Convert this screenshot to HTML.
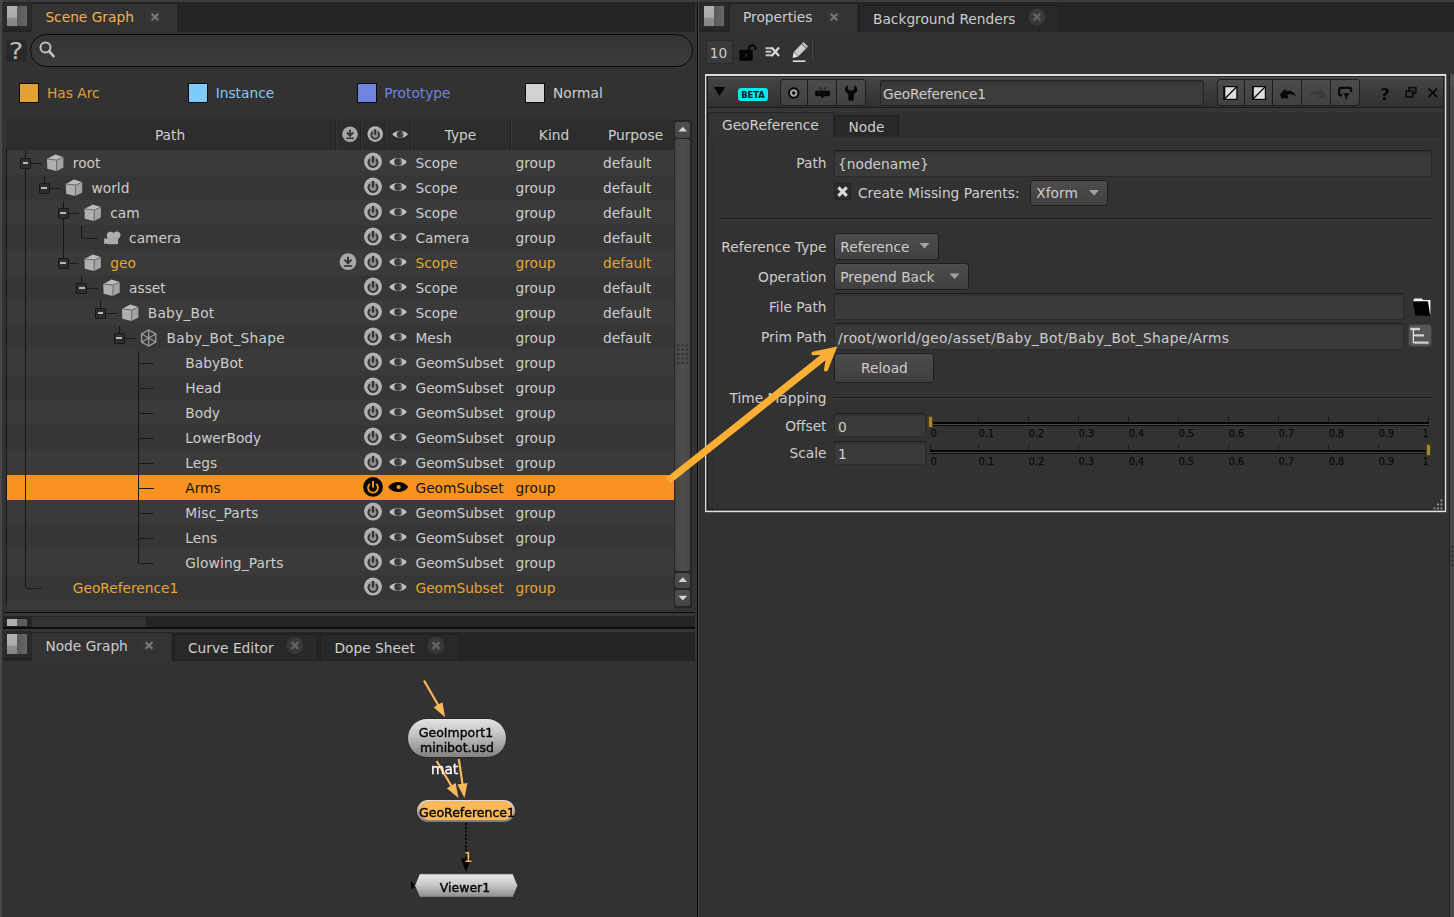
<!DOCTYPE html>
<html lang="en"><head><meta charset="utf-8"><title>Scene Graph - GeoReference</title>
<style>
html,body{margin:0;padding:0;background:#323232;}
body{width:1454px;height:917px;overflow:hidden;font-family:"DejaVu Sans","Liberation Sans",sans-serif;}
#app{position:relative;width:1454px;height:917px;overflow:hidden;background:#323232;}
#app div,#app span.t,#app svg{position:absolute;box-sizing:border-box;}
span.t{white-space:nowrap;line-height:1;font-family:"DejaVu Sans","Liberation Sans",sans-serif;}
svg{overflow:visible;}

</style></head>
<body>
<div id="app">
<div style="left:0px;top:0px;width:1454px;height:2px;background:#3c3c3c;"></div>
<div style="left:0px;top:0px;width:2.2px;height:917px;background:#484848;"></div>
<div style="left:697px;top:2px;width:1px;height:915px;background:#080808;"></div>
<div style="left:3px;top:2px;width:692px;height:30px;background:#242424;"></div>
<div style="left:3px;top:3px;width:28px;height:26px;background:#2a2a2a;"></div>
<div style="left:7px;top:6px;width:10px;height:20px;background:linear-gradient(#b4b4b4 0,#ababab 55%,#8e8e8e 62%,#868686 100%);"></div>
<div style="left:17px;top:6px;width:10px;height:20px;background:linear-gradient(90deg,#5a5a5a,#666);"></div>
<div style="left:31px;top:3px;width:147px;height:29px;background:#333;border:1px solid #262626;border-bottom:none;"></div>
<span class="t " style="left:45.4px;top:9px;font-size:13.75px;line-height:16px;height:16px;color:#f0b056;">Scene Graph</span>
<svg style="left:147px;top:9px;" width="16" height="16" viewBox="0 0 16 16"><circle cx="8" cy="8" r="7.5" fill="#363636"/><path d="M4.7 4.7 L11.3 11.3 M11.3 4.7 L4.7 11.3" stroke="#767676" stroke-width="2.2"/></svg>
<div style="left:5.5px;top:39.5px;width:21px;height:22px;background:#292929;border-radius:2px;"></div>
<span class="t " style="left:-184px;width:400px;text-align:center;top:38px;font-size:22.5px;line-height:26px;height:26px;color:#b9b9b9;transform:scaleX(1.22);">?</span>
<div style="left:30px;top:34px;width:663px;height:32.5px;border:1.5px solid #0a0a0a;border-radius:17px;background:linear-gradient(#333,#3c3c3c);"></div>
<svg style="left:38px;top:40px;" width="20" height="20" viewBox="0 0 20 20"><circle cx="7.5" cy="7.5" r="5" fill="none" stroke="#c0c0c0" stroke-width="2"/><path d="M11 11.2 L15.5 16.2" stroke="#c0c0c0" stroke-width="2.6" stroke-linecap="round"/></svg>
<div style="left:19px;top:83px;width:20px;height:20px;background:#e2a133;border:1px solid #0a0a0a;"></div>
<span class="t " style="left:47px;top:85px;font-size:13.75px;line-height:16px;height:16px;color:#e2a133;">Has Arc</span>
<div style="left:187.5px;top:83px;width:20px;height:20px;background:#7fcbfb;border:1px solid #0a0a0a;"></div>
<span class="t " style="left:215.7px;top:85px;font-size:13.75px;line-height:16px;height:16px;color:#7fcbfb;">Instance</span>
<div style="left:357px;top:83px;width:20px;height:20px;background:#6f83e0;border:1px solid #0a0a0a;"></div>
<span class="t " style="left:384.2px;top:85px;font-size:13.75px;line-height:16px;height:16px;color:#6f83e0;">Prototype</span>
<div style="left:525px;top:83px;width:20px;height:20px;background:#d2d2d2;border:1px solid #0a0a0a;"></div>
<span class="t " style="left:553px;top:85px;font-size:13.75px;line-height:16px;height:16px;color:#cdcdcd;">Normal</span>
<div style="left:6px;top:148px;width:1px;height:457px;background:#161616;"></div>
<div style="left:7px;top:117px;width:667px;height:33px;background:linear-gradient(#323232 0,#2c2c2c 5px,#2d2d2d 100%);"></div>
<div style="left:335px;top:119px;width:1px;height:31px;background:#222;"></div>
<div style="left:336px;top:119px;width:1px;height:31px;background:#353535;"></div>
<div style="left:360px;top:119px;width:1px;height:31px;background:#222;"></div>
<div style="left:361px;top:119px;width:1px;height:31px;background:#353535;"></div>
<div style="left:385px;top:119px;width:1px;height:31px;background:#222;"></div>
<div style="left:386px;top:119px;width:1px;height:31px;background:#353535;"></div>
<div style="left:410px;top:119px;width:1px;height:31px;background:#222;"></div>
<div style="left:411px;top:119px;width:1px;height:31px;background:#353535;"></div>
<div style="left:510px;top:119px;width:1px;height:31px;background:#222;"></div>
<div style="left:511px;top:119px;width:1px;height:31px;background:#353535;"></div>
<span class="t " style="left:-30px;width:400px;text-align:center;top:127px;font-size:13.75px;line-height:16px;height:16px;color:#cdcdcd;">Path</span>
<span class="t " style="left:260.5px;width:400px;text-align:center;top:127px;font-size:13.75px;line-height:16px;height:16px;color:#cdcdcd;">Type</span>
<span class="t " style="left:354px;width:400px;text-align:center;top:127px;font-size:13.75px;line-height:16px;height:16px;color:#cdcdcd;">Kind</span>
<span class="t " style="left:435.5px;width:400px;text-align:center;top:127px;font-size:13.75px;line-height:16px;height:16px;color:#cdcdcd;">Purpose</span>
<div style="left:7px;top:150px;width:667px;height:25px;background:#3a3a3a;"></div>
<div style="left:7px;top:175px;width:667px;height:25px;background:#363636;"></div>
<div style="left:7px;top:200px;width:667px;height:25px;background:#3a3a3a;"></div>
<div style="left:7px;top:225px;width:667px;height:25px;background:#363636;"></div>
<div style="left:7px;top:250px;width:667px;height:25px;background:#3a3a3a;"></div>
<div style="left:7px;top:275px;width:667px;height:25px;background:#363636;"></div>
<div style="left:7px;top:300px;width:667px;height:25px;background:#3a3a3a;"></div>
<div style="left:7px;top:325px;width:667px;height:25px;background:#363636;"></div>
<div style="left:7px;top:350px;width:667px;height:25px;background:#3a3a3a;"></div>
<div style="left:7px;top:375px;width:667px;height:25px;background:#363636;"></div>
<div style="left:7px;top:400px;width:667px;height:25px;background:#3a3a3a;"></div>
<div style="left:7px;top:425px;width:667px;height:25px;background:#363636;"></div>
<div style="left:7px;top:450px;width:667px;height:25px;background:#3a3a3a;"></div>
<div style="left:7px;top:475px;width:667px;height:25px;background:#f7931e;"></div>
<div style="left:7px;top:500px;width:667px;height:25px;background:#3a3a3a;"></div>
<div style="left:7px;top:525px;width:667px;height:25px;background:#363636;"></div>
<div style="left:7px;top:550px;width:667px;height:25px;background:#3a3a3a;"></div>
<div style="left:7px;top:575px;width:667px;height:25px;background:#363636;"></div>
<div style="left:7px;top:600px;width:667px;height:9.6px;background:#3a3a3a;"></div>
<div style="left:25.0px;top:151px;width:1.1px;height:437px;background:#161616;"></div>
<div style="left:25.5px;top:587.5px;width:16.0px;height:1px;background:#1a1a1a;"></div>
<div style="left:43.8px;top:176px;width:1.1px;height:7px;background:#161616;"></div>
<div style="left:62.5px;top:201px;width:1.1px;height:62px;background:#161616;"></div>
<div style="left:81.2px;top:226px;width:1.1px;height:12px;background:#161616;"></div>
<div style="left:81.75px;top:237.5px;width:16.0px;height:1px;background:#1a1a1a;"></div>
<div style="left:81.2px;top:276px;width:1.1px;height:7px;background:#161616;"></div>
<div style="left:100.0px;top:301px;width:1.1px;height:7px;background:#161616;"></div>
<div style="left:118.8px;top:326px;width:1.1px;height:7px;background:#161616;"></div>
<div style="left:137.5px;top:351px;width:1.1px;height:212px;background:#161616;"></div>
<div style="left:138.0px;top:362.5px;width:16.0px;height:1px;background:#1a1a1a;"></div>
<div style="left:138.0px;top:387.5px;width:16.0px;height:1px;background:#1a1a1a;"></div>
<div style="left:138.0px;top:412.5px;width:16.0px;height:1px;background:#1a1a1a;"></div>
<div style="left:138.0px;top:437.5px;width:16.0px;height:1px;background:#1a1a1a;"></div>
<div style="left:138.0px;top:462.5px;width:16.0px;height:1px;background:#1a1a1a;"></div>
<div style="left:138.0px;top:487.5px;width:16.0px;height:1px;background:#1a1a1a;"></div>
<div style="left:138.0px;top:512.5px;width:16.0px;height:1px;background:#1a1a1a;"></div>
<div style="left:138.0px;top:537.5px;width:16.0px;height:1px;background:#1a1a1a;"></div>
<div style="left:138.0px;top:562.5px;width:16.0px;height:1px;background:#1a1a1a;"></div>
<div style="left:20.0px;top:157.5px;width:11px;height:11px;background:#2e2e2e;border:1.1px solid #171717;border-radius:1px;"></div>
<div style="left:22.6px;top:161.8px;width:5.8px;height:2.2px;background:#b6b6b6;"></div>
<div style="left:31.0px;top:162.5px;width:10.5px;height:1px;background:#1a1a1a;"></div>
<svg style="left:46px;top:154px;" width="19" height="19" viewBox="-0.4 -0.2 19 19"><path d="M8.8 0.4 L17 2.9 L10.4 5.9 L0.6 4.7 Z" fill="#bcbcbc"/><path d="M0.6 4.7 L10.4 5.9 L10.1 16.7 L0.9 14.6 Z" fill="#b0b0b0"/><path d="M10.4 5.9 L17 2.9 L17 13.3 L10.1 16.7 Z" fill="#a4a4a4"/><path d="M0.6 4.7 L10.4 5.9 L17 2.9 M10.4 5.9 L10.1 16.7" fill="none" stroke="#666" stroke-width="0.9"/></svg>
<span class="t " style="left:72.8px;top:155px;font-size:13.75px;line-height:16px;height:16px;color:#cdcdcd;">root</span>
<svg style="left:363px;top:152px;" width="20" height="19" viewBox="-0.89 -0.495 19.78 18.791"><circle cx="9" cy="9" r="8.9" fill="#b2b2b2"/><circle cx="9" cy="9.4" r="5.6" fill="#8e8e8e"/><path d="M6.2 6.6 A4.4 4.4 0 1 0 11.8 6.6" fill="none" stroke="#353535" stroke-width="2"/><path d="M9 3.4 V9.9" stroke="#303030" stroke-width="2.1"/></svg>
<svg style="left:388px;top:156px;" width="20" height="12" viewBox="-0.87 -0.522 21.739 13.043"><path d="M0.4 6 C4.4 0.2 15.6 0.2 19.6 6 C15.6 11.8 4.4 11.8 0.4 6 Z" fill="#bebebe"/><circle cx="10" cy="6" r="4.1" fill="#3a3a3a"/><circle cx="12.6" cy="5.6" r="1.1" fill="#6a6a6a"/></svg>
<span class="t " style="left:415.5px;top:155px;font-size:13.75px;line-height:16px;height:16px;color:#cdcdcd;">Scope</span>
<span class="t " style="left:515.5px;top:155px;font-size:13.75px;line-height:16px;height:16px;color:#cdcdcd;">group</span>
<span class="t " style="left:603px;top:155px;font-size:13.75px;line-height:16px;height:16px;color:#cdcdcd;">default</span>
<div style="left:38.8px;top:182.5px;width:11px;height:11px;background:#2e2e2e;border:1.1px solid #171717;border-radius:1px;"></div>
<div style="left:41.4px;top:186.8px;width:5.8px;height:2.2px;background:#b6b6b6;"></div>
<div style="left:49.8px;top:187.5px;width:10.5px;height:1px;background:#1a1a1a;"></div>
<svg style="left:65px;top:179px;" width="19" height="19" viewBox="-0.2 -0.2 19 19"><path d="M8.8 0.4 L17 2.9 L10.4 5.9 L0.6 4.7 Z" fill="#bcbcbc"/><path d="M0.6 4.7 L10.4 5.9 L10.1 16.7 L0.9 14.6 Z" fill="#b0b0b0"/><path d="M10.4 5.9 L17 2.9 L17 13.3 L10.1 16.7 Z" fill="#a4a4a4"/><path d="M0.6 4.7 L10.4 5.9 L17 2.9 M10.4 5.9 L10.1 16.7" fill="none" stroke="#666" stroke-width="0.9"/></svg>
<span class="t " style="left:91.5px;top:180px;font-size:13.75px;line-height:16px;height:16px;color:#cdcdcd;">world</span>
<svg style="left:363px;top:177px;" width="20" height="19" viewBox="-0.89 -0.495 19.78 18.791"><circle cx="9" cy="9" r="8.9" fill="#b2b2b2"/><circle cx="9" cy="9.4" r="5.6" fill="#8e8e8e"/><path d="M6.2 6.6 A4.4 4.4 0 1 0 11.8 6.6" fill="none" stroke="#353535" stroke-width="2"/><path d="M9 3.4 V9.9" stroke="#303030" stroke-width="2.1"/></svg>
<svg style="left:388px;top:181px;" width="20" height="12" viewBox="-0.87 -0.522 21.739 13.043"><path d="M0.4 6 C4.4 0.2 15.6 0.2 19.6 6 C15.6 11.8 4.4 11.8 0.4 6 Z" fill="#bebebe"/><circle cx="10" cy="6" r="4.1" fill="#3a3a3a"/><circle cx="12.6" cy="5.6" r="1.1" fill="#6a6a6a"/></svg>
<span class="t " style="left:415.5px;top:180px;font-size:13.75px;line-height:16px;height:16px;color:#cdcdcd;">Scope</span>
<span class="t " style="left:515.5px;top:180px;font-size:13.75px;line-height:16px;height:16px;color:#cdcdcd;">group</span>
<span class="t " style="left:603px;top:180px;font-size:13.75px;line-height:16px;height:16px;color:#cdcdcd;">default</span>
<div style="left:57.5px;top:207.5px;width:11px;height:11px;background:#2e2e2e;border:1.1px solid #171717;border-radius:1px;"></div>
<div style="left:60.1px;top:211.8px;width:5.8px;height:2.2px;background:#b6b6b6;"></div>
<div style="left:68.5px;top:212.5px;width:10.5px;height:1px;background:#1a1a1a;"></div>
<svg style="left:83px;top:204px;" width="19" height="19" viewBox="-0.9 -0.2 19 19"><path d="M8.8 0.4 L17 2.9 L10.4 5.9 L0.6 4.7 Z" fill="#bcbcbc"/><path d="M0.6 4.7 L10.4 5.9 L10.1 16.7 L0.9 14.6 Z" fill="#b0b0b0"/><path d="M10.4 5.9 L17 2.9 L17 13.3 L10.1 16.7 Z" fill="#a4a4a4"/><path d="M0.6 4.7 L10.4 5.9 L17 2.9 M10.4 5.9 L10.1 16.7" fill="none" stroke="#666" stroke-width="0.9"/></svg>
<span class="t " style="left:110.3px;top:205px;font-size:13.75px;line-height:16px;height:16px;color:#cdcdcd;">cam</span>
<svg style="left:363px;top:202px;" width="20" height="19" viewBox="-0.89 -0.495 19.78 18.791"><circle cx="9" cy="9" r="8.9" fill="#b2b2b2"/><circle cx="9" cy="9.4" r="5.6" fill="#8e8e8e"/><path d="M6.2 6.6 A4.4 4.4 0 1 0 11.8 6.6" fill="none" stroke="#353535" stroke-width="2"/><path d="M9 3.4 V9.9" stroke="#303030" stroke-width="2.1"/></svg>
<svg style="left:388px;top:206px;" width="20" height="12" viewBox="-0.87 -0.522 21.739 13.043"><path d="M0.4 6 C4.4 0.2 15.6 0.2 19.6 6 C15.6 11.8 4.4 11.8 0.4 6 Z" fill="#bebebe"/><circle cx="10" cy="6" r="4.1" fill="#3a3a3a"/><circle cx="12.6" cy="5.6" r="1.1" fill="#6a6a6a"/></svg>
<span class="t " style="left:415.5px;top:205px;font-size:13.75px;line-height:16px;height:16px;color:#cdcdcd;">Scope</span>
<span class="t " style="left:515.5px;top:205px;font-size:13.75px;line-height:16px;height:16px;color:#cdcdcd;">group</span>
<span class="t " style="left:603px;top:205px;font-size:13.75px;line-height:16px;height:16px;color:#cdcdcd;">default</span>
<svg style="left:103px;top:231px;" width="19" height="15" viewBox="-0.9 -0.4 19 15"><circle cx="6.6" cy="4" r="3.7" fill="#aeaeae"/><circle cx="12.8" cy="3.9" r="3.7" fill="#aeaeae"/><path d="M3 6 H14.2 V12.8 H3 Z" fill="#aaaaaa"/><path d="M3.6 8.2 L0.3 6.6 V12.8 L3.6 11.6 Z" fill="#b4b4b4"/></svg>
<span class="t " style="left:129.1px;top:230px;font-size:13.75px;line-height:16px;height:16px;color:#cdcdcd;">camera</span>
<svg style="left:363px;top:227px;" width="20" height="19" viewBox="-0.89 -0.495 19.78 18.791"><circle cx="9" cy="9" r="8.9" fill="#b2b2b2"/><circle cx="9" cy="9.4" r="5.6" fill="#8e8e8e"/><path d="M6.2 6.6 A4.4 4.4 0 1 0 11.8 6.6" fill="none" stroke="#353535" stroke-width="2"/><path d="M9 3.4 V9.9" stroke="#303030" stroke-width="2.1"/></svg>
<svg style="left:388px;top:231px;" width="20" height="12" viewBox="-0.87 -0.522 21.739 13.043"><path d="M0.4 6 C4.4 0.2 15.6 0.2 19.6 6 C15.6 11.8 4.4 11.8 0.4 6 Z" fill="#bebebe"/><circle cx="10" cy="6" r="4.1" fill="#3a3a3a"/><circle cx="12.6" cy="5.6" r="1.1" fill="#6a6a6a"/></svg>
<span class="t " style="left:415.5px;top:230px;font-size:13.75px;line-height:16px;height:16px;color:#cdcdcd;">Camera</span>
<span class="t " style="left:515.5px;top:230px;font-size:13.75px;line-height:16px;height:16px;color:#cdcdcd;">group</span>
<span class="t " style="left:603px;top:230px;font-size:13.75px;line-height:16px;height:16px;color:#cdcdcd;">default</span>
<div style="left:57.5px;top:257.5px;width:11px;height:11px;background:#2e2e2e;border:1.1px solid #171717;border-radius:1px;"></div>
<div style="left:60.1px;top:261.8px;width:5.8px;height:2.2px;background:#b6b6b6;"></div>
<div style="left:68.5px;top:262.5px;width:10.5px;height:1px;background:#1a1a1a;"></div>
<svg style="left:83px;top:254px;" width="19" height="19" viewBox="-0.9 -0.2 19 19"><path d="M8.8 0.4 L17 2.9 L10.4 5.9 L0.6 4.7 Z" fill="#bcbcbc"/><path d="M0.6 4.7 L10.4 5.9 L10.1 16.7 L0.9 14.6 Z" fill="#b0b0b0"/><path d="M10.4 5.9 L17 2.9 L17 13.3 L10.1 16.7 Z" fill="#a4a4a4"/><path d="M0.6 4.7 L10.4 5.9 L17 2.9 M10.4 5.9 L10.1 16.7" fill="none" stroke="#666" stroke-width="0.9"/></svg>
<span class="t " style="left:110.3px;top:255px;font-size:13.75px;line-height:16px;height:16px;color:#e6a530;">geo</span>
<svg style="left:339px;top:253px;" width="18" height="18" viewBox="-0.5 -0.2 18 18"><circle cx="8.5" cy="8.5" r="8.4" fill="#a8a8a8"/><path d="M8.5 3.6 V9.6" stroke="#333" stroke-width="2"/><path d="M5 6.4 L8.5 10.2 L12 6.4" fill="none" stroke="#333" stroke-width="1.9"/><path d="M4.4 12.8 H12.6" stroke="#333" stroke-width="1.7"/></svg>
<svg style="left:363px;top:252px;" width="20" height="19" viewBox="-0.89 -0.495 19.78 18.791"><circle cx="9" cy="9" r="8.9" fill="#b2b2b2"/><circle cx="9" cy="9.4" r="5.6" fill="#8e8e8e"/><path d="M6.2 6.6 A4.4 4.4 0 1 0 11.8 6.6" fill="none" stroke="#353535" stroke-width="2"/><path d="M9 3.4 V9.9" stroke="#303030" stroke-width="2.1"/></svg>
<svg style="left:388px;top:256px;" width="20" height="12" viewBox="-0.87 -0.522 21.739 13.043"><path d="M0.4 6 C4.4 0.2 15.6 0.2 19.6 6 C15.6 11.8 4.4 11.8 0.4 6 Z" fill="#bebebe"/><circle cx="10" cy="6" r="4.1" fill="#3a3a3a"/><circle cx="12.6" cy="5.6" r="1.1" fill="#6a6a6a"/></svg>
<span class="t " style="left:415.5px;top:255px;font-size:13.75px;line-height:16px;height:16px;color:#e6a530;">Scope</span>
<span class="t " style="left:515.5px;top:255px;font-size:13.75px;line-height:16px;height:16px;color:#e6a530;">group</span>
<span class="t " style="left:603px;top:255px;font-size:13.75px;line-height:16px;height:16px;color:#e6a530;">default</span>
<div style="left:76.2px;top:282.5px;width:11px;height:11px;background:#2e2e2e;border:1.1px solid #171717;border-radius:1px;"></div>
<div style="left:78.8px;top:286.8px;width:5.8px;height:2.2px;background:#b6b6b6;"></div>
<div style="left:87.2px;top:287.5px;width:10.5px;height:1px;background:#1a1a1a;"></div>
<svg style="left:102px;top:279px;" width="19" height="19" viewBox="-0.7 -0.2 19 19"><path d="M8.8 0.4 L17 2.9 L10.4 5.9 L0.6 4.7 Z" fill="#bcbcbc"/><path d="M0.6 4.7 L10.4 5.9 L10.1 16.7 L0.9 14.6 Z" fill="#b0b0b0"/><path d="M10.4 5.9 L17 2.9 L17 13.3 L10.1 16.7 Z" fill="#a4a4a4"/><path d="M0.6 4.7 L10.4 5.9 L17 2.9 M10.4 5.9 L10.1 16.7" fill="none" stroke="#666" stroke-width="0.9"/></svg>
<span class="t " style="left:129.1px;top:280px;font-size:13.75px;line-height:16px;height:16px;color:#cdcdcd;">asset</span>
<svg style="left:363px;top:277px;" width="20" height="19" viewBox="-0.89 -0.495 19.78 18.791"><circle cx="9" cy="9" r="8.9" fill="#b2b2b2"/><circle cx="9" cy="9.4" r="5.6" fill="#8e8e8e"/><path d="M6.2 6.6 A4.4 4.4 0 1 0 11.8 6.6" fill="none" stroke="#353535" stroke-width="2"/><path d="M9 3.4 V9.9" stroke="#303030" stroke-width="2.1"/></svg>
<svg style="left:388px;top:281px;" width="20" height="12" viewBox="-0.87 -0.522 21.739 13.043"><path d="M0.4 6 C4.4 0.2 15.6 0.2 19.6 6 C15.6 11.8 4.4 11.8 0.4 6 Z" fill="#bebebe"/><circle cx="10" cy="6" r="4.1" fill="#3a3a3a"/><circle cx="12.6" cy="5.6" r="1.1" fill="#6a6a6a"/></svg>
<span class="t " style="left:415.5px;top:280px;font-size:13.75px;line-height:16px;height:16px;color:#cdcdcd;">Scope</span>
<span class="t " style="left:515.5px;top:280px;font-size:13.75px;line-height:16px;height:16px;color:#cdcdcd;">group</span>
<span class="t " style="left:603px;top:280px;font-size:13.75px;line-height:16px;height:16px;color:#cdcdcd;">default</span>
<div style="left:95.0px;top:307.5px;width:11px;height:11px;background:#2e2e2e;border:1.1px solid #171717;border-radius:1px;"></div>
<div style="left:97.6px;top:311.8px;width:5.8px;height:2.2px;background:#b6b6b6;"></div>
<div style="left:106.0px;top:312.5px;width:10.5px;height:1px;background:#1a1a1a;"></div>
<svg style="left:121px;top:304px;" width="19" height="19" viewBox="-0.4 -0.2 19 19"><path d="M8.8 0.4 L17 2.9 L10.4 5.9 L0.6 4.7 Z" fill="#bcbcbc"/><path d="M0.6 4.7 L10.4 5.9 L10.1 16.7 L0.9 14.6 Z" fill="#b0b0b0"/><path d="M10.4 5.9 L17 2.9 L17 13.3 L10.1 16.7 Z" fill="#a4a4a4"/><path d="M0.6 4.7 L10.4 5.9 L17 2.9 M10.4 5.9 L10.1 16.7" fill="none" stroke="#666" stroke-width="0.9"/></svg>
<span class="t " style="left:147.8px;top:305px;font-size:13.75px;line-height:16px;height:16px;color:#cdcdcd;letter-spacing:0.225px;">Baby_Bot</span>
<svg style="left:363px;top:302px;" width="20" height="19" viewBox="-0.89 -0.495 19.78 18.791"><circle cx="9" cy="9" r="8.9" fill="#b2b2b2"/><circle cx="9" cy="9.4" r="5.6" fill="#8e8e8e"/><path d="M6.2 6.6 A4.4 4.4 0 1 0 11.8 6.6" fill="none" stroke="#353535" stroke-width="2"/><path d="M9 3.4 V9.9" stroke="#303030" stroke-width="2.1"/></svg>
<svg style="left:388px;top:306px;" width="20" height="12" viewBox="-0.87 -0.522 21.739 13.043"><path d="M0.4 6 C4.4 0.2 15.6 0.2 19.6 6 C15.6 11.8 4.4 11.8 0.4 6 Z" fill="#bebebe"/><circle cx="10" cy="6" r="4.1" fill="#3a3a3a"/><circle cx="12.6" cy="5.6" r="1.1" fill="#6a6a6a"/></svg>
<span class="t " style="left:415.5px;top:305px;font-size:13.75px;line-height:16px;height:16px;color:#cdcdcd;">Scope</span>
<span class="t " style="left:515.5px;top:305px;font-size:13.75px;line-height:16px;height:16px;color:#cdcdcd;">group</span>
<span class="t " style="left:603px;top:305px;font-size:13.75px;line-height:16px;height:16px;color:#cdcdcd;">default</span>
<div style="left:113.8px;top:332.5px;width:11px;height:11px;background:#2e2e2e;border:1.1px solid #171717;border-radius:1px;"></div>
<div style="left:116.3px;top:336.8px;width:5.8px;height:2.2px;background:#b6b6b6;"></div>
<div style="left:124.8px;top:337.5px;width:10.5px;height:1px;background:#1a1a1a;"></div>
<svg style="left:140px;top:329px;" width="18" height="18" viewBox="-0.2 0 18 18"><path d="M8.5 1 L15.6 5 V13 L8.5 17 L1.4 13 V5 Z" fill="none" stroke="#9e9e9e" stroke-width="1.3"/><path d="M8.5 1 V17 M1.4 5 L15.6 13 M15.6 5 L1.4 13" fill="none" stroke="#9e9e9e" stroke-width="1.2"/></svg>
<span class="t " style="left:166.6px;top:330px;font-size:13.75px;line-height:16px;height:16px;color:#cdcdcd;letter-spacing:0.257px;">Baby_Bot_Shape</span>
<svg style="left:363px;top:327px;" width="20" height="19" viewBox="-0.89 -0.495 19.78 18.791"><circle cx="9" cy="9" r="8.9" fill="#b2b2b2"/><circle cx="9" cy="9.4" r="5.6" fill="#8e8e8e"/><path d="M6.2 6.6 A4.4 4.4 0 1 0 11.8 6.6" fill="none" stroke="#353535" stroke-width="2"/><path d="M9 3.4 V9.9" stroke="#303030" stroke-width="2.1"/></svg>
<svg style="left:388px;top:331px;" width="20" height="12" viewBox="-0.87 -0.522 21.739 13.043"><path d="M0.4 6 C4.4 0.2 15.6 0.2 19.6 6 C15.6 11.8 4.4 11.8 0.4 6 Z" fill="#bebebe"/><circle cx="10" cy="6" r="4.1" fill="#3a3a3a"/><circle cx="12.6" cy="5.6" r="1.1" fill="#6a6a6a"/></svg>
<span class="t " style="left:415.5px;top:330px;font-size:13.75px;line-height:16px;height:16px;color:#cdcdcd;">Mesh</span>
<span class="t " style="left:515.5px;top:330px;font-size:13.75px;line-height:16px;height:16px;color:#cdcdcd;">group</span>
<span class="t " style="left:603px;top:330px;font-size:13.75px;line-height:16px;height:16px;color:#cdcdcd;">default</span>
<span class="t " style="left:185.3px;top:355px;font-size:13.75px;line-height:16px;height:16px;color:#cdcdcd;">BabyBot</span>
<svg style="left:363px;top:352px;" width="20" height="19" viewBox="-0.89 -0.495 19.78 18.791"><circle cx="9" cy="9" r="8.9" fill="#b2b2b2"/><circle cx="9" cy="9.4" r="5.6" fill="#8e8e8e"/><path d="M6.2 6.6 A4.4 4.4 0 1 0 11.8 6.6" fill="none" stroke="#353535" stroke-width="2"/><path d="M9 3.4 V9.9" stroke="#303030" stroke-width="2.1"/></svg>
<svg style="left:388px;top:356px;" width="20" height="12" viewBox="-0.87 -0.522 21.739 13.043"><path d="M0.4 6 C4.4 0.2 15.6 0.2 19.6 6 C15.6 11.8 4.4 11.8 0.4 6 Z" fill="#bebebe"/><circle cx="10" cy="6" r="4.1" fill="#3a3a3a"/><circle cx="12.6" cy="5.6" r="1.1" fill="#6a6a6a"/></svg>
<span class="t " style="left:415.5px;top:355px;font-size:13.75px;line-height:16px;height:16px;color:#cdcdcd;">GeomSubset</span>
<span class="t " style="left:515.5px;top:355px;font-size:13.75px;line-height:16px;height:16px;color:#cdcdcd;">group</span>
<span class="t " style="left:185.3px;top:380px;font-size:13.75px;line-height:16px;height:16px;color:#cdcdcd;">Head</span>
<svg style="left:363px;top:377px;" width="20" height="19" viewBox="-0.89 -0.495 19.78 18.791"><circle cx="9" cy="9" r="8.9" fill="#b2b2b2"/><circle cx="9" cy="9.4" r="5.6" fill="#8e8e8e"/><path d="M6.2 6.6 A4.4 4.4 0 1 0 11.8 6.6" fill="none" stroke="#353535" stroke-width="2"/><path d="M9 3.4 V9.9" stroke="#303030" stroke-width="2.1"/></svg>
<svg style="left:388px;top:381px;" width="20" height="12" viewBox="-0.87 -0.522 21.739 13.043"><path d="M0.4 6 C4.4 0.2 15.6 0.2 19.6 6 C15.6 11.8 4.4 11.8 0.4 6 Z" fill="#bebebe"/><circle cx="10" cy="6" r="4.1" fill="#3a3a3a"/><circle cx="12.6" cy="5.6" r="1.1" fill="#6a6a6a"/></svg>
<span class="t " style="left:415.5px;top:380px;font-size:13.75px;line-height:16px;height:16px;color:#cdcdcd;">GeomSubset</span>
<span class="t " style="left:515.5px;top:380px;font-size:13.75px;line-height:16px;height:16px;color:#cdcdcd;">group</span>
<span class="t " style="left:185.3px;top:405px;font-size:13.75px;line-height:16px;height:16px;color:#cdcdcd;">Body</span>
<svg style="left:363px;top:402px;" width="20" height="19" viewBox="-0.89 -0.495 19.78 18.791"><circle cx="9" cy="9" r="8.9" fill="#b2b2b2"/><circle cx="9" cy="9.4" r="5.6" fill="#8e8e8e"/><path d="M6.2 6.6 A4.4 4.4 0 1 0 11.8 6.6" fill="none" stroke="#353535" stroke-width="2"/><path d="M9 3.4 V9.9" stroke="#303030" stroke-width="2.1"/></svg>
<svg style="left:388px;top:406px;" width="20" height="12" viewBox="-0.87 -0.522 21.739 13.043"><path d="M0.4 6 C4.4 0.2 15.6 0.2 19.6 6 C15.6 11.8 4.4 11.8 0.4 6 Z" fill="#bebebe"/><circle cx="10" cy="6" r="4.1" fill="#3a3a3a"/><circle cx="12.6" cy="5.6" r="1.1" fill="#6a6a6a"/></svg>
<span class="t " style="left:415.5px;top:405px;font-size:13.75px;line-height:16px;height:16px;color:#cdcdcd;">GeomSubset</span>
<span class="t " style="left:515.5px;top:405px;font-size:13.75px;line-height:16px;height:16px;color:#cdcdcd;">group</span>
<span class="t " style="left:185.3px;top:430px;font-size:13.75px;line-height:16px;height:16px;color:#cdcdcd;">LowerBody</span>
<svg style="left:363px;top:427px;" width="20" height="19" viewBox="-0.89 -0.495 19.78 18.791"><circle cx="9" cy="9" r="8.9" fill="#b2b2b2"/><circle cx="9" cy="9.4" r="5.6" fill="#8e8e8e"/><path d="M6.2 6.6 A4.4 4.4 0 1 0 11.8 6.6" fill="none" stroke="#353535" stroke-width="2"/><path d="M9 3.4 V9.9" stroke="#303030" stroke-width="2.1"/></svg>
<svg style="left:388px;top:431px;" width="20" height="12" viewBox="-0.87 -0.522 21.739 13.043"><path d="M0.4 6 C4.4 0.2 15.6 0.2 19.6 6 C15.6 11.8 4.4 11.8 0.4 6 Z" fill="#bebebe"/><circle cx="10" cy="6" r="4.1" fill="#3a3a3a"/><circle cx="12.6" cy="5.6" r="1.1" fill="#6a6a6a"/></svg>
<span class="t " style="left:415.5px;top:430px;font-size:13.75px;line-height:16px;height:16px;color:#cdcdcd;">GeomSubset</span>
<span class="t " style="left:515.5px;top:430px;font-size:13.75px;line-height:16px;height:16px;color:#cdcdcd;">group</span>
<span class="t " style="left:185.3px;top:455px;font-size:13.75px;line-height:16px;height:16px;color:#cdcdcd;">Legs</span>
<svg style="left:363px;top:452px;" width="20" height="19" viewBox="-0.89 -0.495 19.78 18.791"><circle cx="9" cy="9" r="8.9" fill="#b2b2b2"/><circle cx="9" cy="9.4" r="5.6" fill="#8e8e8e"/><path d="M6.2 6.6 A4.4 4.4 0 1 0 11.8 6.6" fill="none" stroke="#353535" stroke-width="2"/><path d="M9 3.4 V9.9" stroke="#303030" stroke-width="2.1"/></svg>
<svg style="left:388px;top:456px;" width="20" height="12" viewBox="-0.87 -0.522 21.739 13.043"><path d="M0.4 6 C4.4 0.2 15.6 0.2 19.6 6 C15.6 11.8 4.4 11.8 0.4 6 Z" fill="#bebebe"/><circle cx="10" cy="6" r="4.1" fill="#3a3a3a"/><circle cx="12.6" cy="5.6" r="1.1" fill="#6a6a6a"/></svg>
<span class="t " style="left:415.5px;top:455px;font-size:13.75px;line-height:16px;height:16px;color:#cdcdcd;">GeomSubset</span>
<span class="t " style="left:515.5px;top:455px;font-size:13.75px;line-height:16px;height:16px;color:#cdcdcd;">group</span>
<span class="t " style="left:185.3px;top:480px;font-size:13.75px;line-height:16px;height:16px;color:#141414;">Arms</span>
<svg style="left:363px;top:477px;" width="20" height="20" viewBox="-0.091 0 18.182 18.182"><circle cx="9" cy="9" r="9" fill="#050505"/><path d="M6.1 6.3 A4.5 4.5 0 1 0 11.9 6.3" fill="none" stroke="#f7931e" stroke-width="1.7"/><path d="M9 3.7 V9.6" stroke="#f7931e" stroke-width="1.8"/></svg>
<svg style="left:388px;top:481px;" width="21" height="12" viewBox="-0.2 0 21 12"><path d="M0 6 C4 -0.6 16 -0.6 20 6 C16 12.6 4 12.6 0 6 Z" fill="#050505"/><circle cx="10.4" cy="6" r="2.1" fill="#f7931e"/></svg>
<span class="t " style="left:415.5px;top:480px;font-size:13.75px;line-height:16px;height:16px;color:#141414;">GeomSubset</span>
<span class="t " style="left:515.5px;top:480px;font-size:13.75px;line-height:16px;height:16px;color:#141414;">group</span>
<span class="t " style="left:185.3px;top:505px;font-size:13.75px;line-height:16px;height:16px;color:#cdcdcd;letter-spacing:0.180px;">Misc_Parts</span>
<svg style="left:363px;top:502px;" width="20" height="19" viewBox="-0.89 -0.495 19.78 18.791"><circle cx="9" cy="9" r="8.9" fill="#b2b2b2"/><circle cx="9" cy="9.4" r="5.6" fill="#8e8e8e"/><path d="M6.2 6.6 A4.4 4.4 0 1 0 11.8 6.6" fill="none" stroke="#353535" stroke-width="2"/><path d="M9 3.4 V9.9" stroke="#303030" stroke-width="2.1"/></svg>
<svg style="left:388px;top:506px;" width="20" height="12" viewBox="-0.87 -0.522 21.739 13.043"><path d="M0.4 6 C4.4 0.2 15.6 0.2 19.6 6 C15.6 11.8 4.4 11.8 0.4 6 Z" fill="#bebebe"/><circle cx="10" cy="6" r="4.1" fill="#3a3a3a"/><circle cx="12.6" cy="5.6" r="1.1" fill="#6a6a6a"/></svg>
<span class="t " style="left:415.5px;top:505px;font-size:13.75px;line-height:16px;height:16px;color:#cdcdcd;">GeomSubset</span>
<span class="t " style="left:515.5px;top:505px;font-size:13.75px;line-height:16px;height:16px;color:#cdcdcd;">group</span>
<span class="t " style="left:185.3px;top:530px;font-size:13.75px;line-height:16px;height:16px;color:#cdcdcd;">Lens</span>
<svg style="left:363px;top:527px;" width="20" height="19" viewBox="-0.89 -0.495 19.78 18.791"><circle cx="9" cy="9" r="8.9" fill="#b2b2b2"/><circle cx="9" cy="9.4" r="5.6" fill="#8e8e8e"/><path d="M6.2 6.6 A4.4 4.4 0 1 0 11.8 6.6" fill="none" stroke="#353535" stroke-width="2"/><path d="M9 3.4 V9.9" stroke="#303030" stroke-width="2.1"/></svg>
<svg style="left:388px;top:531px;" width="20" height="12" viewBox="-0.87 -0.522 21.739 13.043"><path d="M0.4 6 C4.4 0.2 15.6 0.2 19.6 6 C15.6 11.8 4.4 11.8 0.4 6 Z" fill="#bebebe"/><circle cx="10" cy="6" r="4.1" fill="#3a3a3a"/><circle cx="12.6" cy="5.6" r="1.1" fill="#6a6a6a"/></svg>
<span class="t " style="left:415.5px;top:530px;font-size:13.75px;line-height:16px;height:16px;color:#cdcdcd;">GeomSubset</span>
<span class="t " style="left:515.5px;top:530px;font-size:13.75px;line-height:16px;height:16px;color:#cdcdcd;">group</span>
<span class="t " style="left:185.3px;top:555px;font-size:13.75px;line-height:16px;height:16px;color:#cdcdcd;letter-spacing:0.138px;">Glowing_Parts</span>
<svg style="left:363px;top:552px;" width="20" height="19" viewBox="-0.89 -0.495 19.78 18.791"><circle cx="9" cy="9" r="8.9" fill="#b2b2b2"/><circle cx="9" cy="9.4" r="5.6" fill="#8e8e8e"/><path d="M6.2 6.6 A4.4 4.4 0 1 0 11.8 6.6" fill="none" stroke="#353535" stroke-width="2"/><path d="M9 3.4 V9.9" stroke="#303030" stroke-width="2.1"/></svg>
<svg style="left:388px;top:556px;" width="20" height="12" viewBox="-0.87 -0.522 21.739 13.043"><path d="M0.4 6 C4.4 0.2 15.6 0.2 19.6 6 C15.6 11.8 4.4 11.8 0.4 6 Z" fill="#bebebe"/><circle cx="10" cy="6" r="4.1" fill="#3a3a3a"/><circle cx="12.6" cy="5.6" r="1.1" fill="#6a6a6a"/></svg>
<span class="t " style="left:415.5px;top:555px;font-size:13.75px;line-height:16px;height:16px;color:#cdcdcd;">GeomSubset</span>
<span class="t " style="left:515.5px;top:555px;font-size:13.75px;line-height:16px;height:16px;color:#cdcdcd;">group</span>
<span class="t " style="left:72.8px;top:580px;font-size:13.75px;line-height:16px;height:16px;color:#e6a530;">GeoReference1</span>
<svg style="left:363px;top:577px;" width="20" height="19" viewBox="-0.89 -0.495 19.78 18.791"><circle cx="9" cy="9" r="8.9" fill="#b2b2b2"/><circle cx="9" cy="9.4" r="5.6" fill="#8e8e8e"/><path d="M6.2 6.6 A4.4 4.4 0 1 0 11.8 6.6" fill="none" stroke="#353535" stroke-width="2"/><path d="M9 3.4 V9.9" stroke="#303030" stroke-width="2.1"/></svg>
<svg style="left:388px;top:581px;" width="20" height="12" viewBox="-0.87 -0.522 21.739 13.043"><path d="M0.4 6 C4.4 0.2 15.6 0.2 19.6 6 C15.6 11.8 4.4 11.8 0.4 6 Z" fill="#bebebe"/><circle cx="10" cy="6" r="4.1" fill="#3a3a3a"/><circle cx="12.6" cy="5.6" r="1.1" fill="#6a6a6a"/></svg>
<span class="t " style="left:415.5px;top:580px;font-size:13.75px;line-height:16px;height:16px;color:#e6a530;">GeomSubset</span>
<span class="t " style="left:515.5px;top:580px;font-size:13.75px;line-height:16px;height:16px;color:#e6a530;">group</span>
<svg style="left:342px;top:126px;" width="16" height="17" viewBox="-0.108 -0.43 17.215 18.291"><circle cx="8.5" cy="8.5" r="8.4" fill="#a8a8a8"/><path d="M8.5 3.6 V9.6" stroke="#333" stroke-width="2"/><path d="M5 6.4 L8.5 10.2 L12 6.4" fill="none" stroke="#333" stroke-width="1.9"/><path d="M4.4 12.8 H12.6" stroke="#333" stroke-width="1.7"/></svg>
<svg style="left:367px;top:126px;" width="17" height="17" viewBox="-0.342 -0.228 19.367 19.367"><circle cx="9" cy="9" r="8.9" fill="#b2b2b2"/><circle cx="9" cy="9.4" r="5.6" fill="#8e8e8e"/><path d="M6.2 6.6 A4.4 4.4 0 1 0 11.8 6.6" fill="none" stroke="#353535" stroke-width="2"/><path d="M9 3.4 V9.9" stroke="#303030" stroke-width="2.1"/></svg>
<svg style="left:391px;top:129px;" width="18" height="11" viewBox="-1.098 -0.463 21.951 13.415"><path d="M0.4 6 C4.4 0.2 15.6 0.2 19.6 6 C15.6 11.8 4.4 11.8 0.4 6 Z" fill="#bebebe"/><circle cx="10" cy="6" r="4.1" fill="#3a3a3a"/><circle cx="12.6" cy="5.6" r="1.1" fill="#6a6a6a"/></svg>
<div style="left:674px;top:120px;width:18px;height:488px;background:#262626;"></div>
<div style="left:675px;top:122px;width:15.4px;height:15.5px;background:linear-gradient(#4e4e4e,#444);border-radius:2.5px;"></div>
<svg style="left:676px;top:125px;" width="14" height="9" viewBox="-0.2 -0.6 14 9"><polygon points="2.2,6 11,6 6.6,1.2" fill="#d2d2d2"/></svg>
<div style="left:675px;top:139px;width:15.4px;height:431.5px;background:linear-gradient(90deg,#454545,#4e4e4e 50%,#464646);border-radius:2.5px;"></div>
<svg style="left:676px;top:343px;" width="14" height="24" viewBox="-0.6 -0.6 14 24"><rect x="0.6" y="0.6" width="2.2" height="2.2" rx="0.6" fill="#333"/><rect x="4.9" y="0.6" width="2.2" height="2.2" rx="0.6" fill="#333"/><rect x="9.2" y="0.6" width="2.2" height="2.2" rx="0.6" fill="#333"/><rect x="0.6" y="5.0" width="2.2" height="2.2" rx="0.6" fill="#333"/><rect x="4.9" y="5.0" width="2.2" height="2.2" rx="0.6" fill="#333"/><rect x="9.2" y="5.0" width="2.2" height="2.2" rx="0.6" fill="#333"/><rect x="0.6" y="9.4" width="2.2" height="2.2" rx="0.6" fill="#333"/><rect x="4.9" y="9.4" width="2.2" height="2.2" rx="0.6" fill="#333"/><rect x="9.2" y="9.4" width="2.2" height="2.2" rx="0.6" fill="#333"/><rect x="0.6" y="13.8" width="2.2" height="2.2" rx="0.6" fill="#333"/><rect x="4.9" y="13.8" width="2.2" height="2.2" rx="0.6" fill="#333"/><rect x="9.2" y="13.8" width="2.2" height="2.2" rx="0.6" fill="#333"/><rect x="0.6" y="18.2" width="2.2" height="2.2" rx="0.6" fill="#333"/><rect x="4.9" y="18.2" width="2.2" height="2.2" rx="0.6" fill="#333"/><rect x="9.2" y="18.2" width="2.2" height="2.2" rx="0.6" fill="#333"/></svg>
<div style="left:675px;top:572.5px;width:15.4px;height:15.5px;background:linear-gradient(#4e4e4e,#444);border-radius:2.5px;"></div>
<svg style="left:676px;top:576px;" width="14" height="9" viewBox="-0.2 -0.1 14 9"><polygon points="2.2,6 11,6 6.6,1.2" fill="#d2d2d2"/></svg>
<div style="left:675px;top:589.5px;width:15.4px;height:16.5px;background:linear-gradient(#4e4e4e,#444);border-radius:2.5px;"></div>
<svg style="left:676px;top:594px;" width="14" height="9" viewBox="-0.2 -0.5 14 9"><polygon points="2.2,1.2 11,1.2 6.6,6" fill="#d2d2d2"/></svg>
<div style="left:3px;top:611.5px;width:692px;height:1.5px;background:#0c0c0c;"></div>
<div style="left:3px;top:613px;width:692px;height:3px;background:#363636;"></div>
<div style="left:3px;top:616px;width:692px;height:11px;background:#242424;"></div>
<div style="left:7px;top:619px;width:10px;height:7px;background:#b0b0b0;"></div>
<div style="left:17px;top:619px;width:10px;height:7px;background:#5c5c5c;"></div>
<div style="left:31.5px;top:617px;width:114px;height:10px;background:#343434;"></div>
<div style="left:3px;top:627px;width:692px;height:1.5px;background:#0c0c0c;"></div>
<div style="left:3px;top:628.5px;width:692px;height:3px;background:#363636;"></div>
<div style="left:3px;top:631.5px;width:692px;height:29.5px;background:#242424;"></div>
<div style="left:3px;top:631px;width:28px;height:26px;background:#2a2a2a;"></div>
<div style="left:7px;top:634px;width:10px;height:20px;background:linear-gradient(#b4b4b4 0,#ababab 55%,#8e8e8e 62%,#868686 100%);"></div>
<div style="left:17px;top:634px;width:10px;height:20px;background:linear-gradient(90deg,#5a5a5a,#666);"></div>
<div style="left:31px;top:632px;width:141px;height:29px;background:#333;border:1px solid #262626;border-bottom:none;"></div>
<span class="t " style="left:45.4px;top:638px;font-size:13.75px;line-height:16px;height:16px;color:#cdcdcd;">Node Graph</span>
<svg style="left:141px;top:637px;" width="16" height="17" viewBox="0 -0.5 16 17"><circle cx="8" cy="8" r="7.5" fill="#363636"/><path d="M4.7 4.7 L11.3 11.3 M11.3 4.7 L4.7 11.3" stroke="#767676" stroke-width="2.2"/></svg>
<div style="left:173.5px;top:634px;width:144.5px;height:27px;background:#282828;border:1px solid #1e1e1e;border-bottom:none;"></div>
<span class="t " style="left:188px;top:640px;font-size:13.75px;line-height:16px;height:16px;color:#cdcdcd;">Curve Editor</span>
<svg style="left:286px;top:636px;" width="18" height="19" viewBox="0 -0.5 18 19"><circle cx="9" cy="9" r="8.4" fill="#393939"/><path d="M5.6 5.6 L12.4 12.4 M12.4 5.6 L5.6 12.4" stroke="#626262" stroke-width="2.3"/></svg>
<div style="left:319.5px;top:634px;width:140px;height:27px;background:#282828;border:1px solid #1e1e1e;border-bottom:none;"></div>
<span class="t " style="left:334.5px;top:640px;font-size:13.75px;line-height:16px;height:16px;color:#cdcdcd;">Dope Sheet</span>
<svg style="left:427px;top:636px;" width="18" height="19" viewBox="0 -0.5 18 19"><circle cx="9" cy="9" r="8.4" fill="#393939"/><path d="M5.6 5.6 L12.4 12.4 M12.4 5.6 L5.6 12.4" stroke="#626262" stroke-width="2.3"/></svg>
<svg style="left:0px;top:0px;pointer-events:none;" width="1454" height="917" viewBox="0 0 1454 917"><path d="M424.0 680.5 L439.0 706.5" stroke="#fbb85a" stroke-width="2.2" fill="none"/><polygon points="445.1,717.2 433.6,707.3 442.4,702.3" fill="#fbb85a"/><path d="M436.6 761.0 L452.2 787.3" stroke="#fbb85a" stroke-width="2.2" fill="none"/><polygon points="458.5,797.9 446.8,788.2 455.6,783.0" fill="#fbb85a"/><path d="M458.8 759.0 L462.7 785.7" stroke="#fbb85a" stroke-width="2.2" fill="none"/><polygon points="464.5,797.9 457.4,784.5 467.5,783.0" fill="#fbb85a"/><path d="M466 823 V859" stroke="#060606" stroke-width="2" stroke-dasharray="2 1.75" fill="none"/><polygon points="461,858.5 471,858.5 466,872" fill="#050505"/><defs><linearGradient id="vg" x1="0" y1="0" x2="0" y2="1"><stop offset="0" stop-color="#ececec"/><stop offset="0.5" stop-color="#c4c4c4"/><stop offset="1" stop-color="#8c8c8c"/></linearGradient></defs><polygon points="411,880.8 415.4,885.4 411,890" fill="#050505"/><polygon points="419.5,873.8 513,873.8 517.8,885.5 513,897.3 419.5,897.3 414.7,885.5" fill="url(#vg)" stroke="#2a2a2a" stroke-width="0.8"/></svg>
<div style="left:407.5px;top:719px;width:98.5px;height:38px;border-radius:19px;background:linear-gradient(#e2e2e2 0,#c8c8c8 35%,#9e9e9e 75%,#828282 100%);box-shadow:0 0 1.5px #1a1a1a;"></div>
<span class="t " style="left:256.2px;width:400px;text-align:center;top:725px;font-size:12.5px;line-height:15px;height:15px;color:#050505;will-change:transform;-webkit-text-stroke:0.4px #050505;">GeoImport1</span>
<span class="t " style="left:256.6px;width:400px;text-align:center;top:740px;font-size:12.5px;line-height:15px;height:15px;color:#050505;will-change:transform;-webkit-text-stroke:0.4px #050505;">minibot.usd</span>
<span class="t " style="left:430.8px;top:761px;font-size:13.75px;line-height:16px;height:16px;color:#ffffff;will-change:transform;-webkit-text-stroke:0.3px #fff;">mat</span>
<div style="left:417.3px;top:799.7px;width:97.5px;height:22.5px;border-radius:11.5px;background:linear-gradient(#e0e0e0,#7c7c7c);"></div>
<div style="left:418.8px;top:801.3px;width:94.5px;height:18.6px;border-radius:9.5px;background:#fbb85a;"></div>
<span class="t " style="left:266.6px;width:400px;text-align:center;top:805px;font-size:12.5px;line-height:15px;height:15px;color:#050505;will-change:transform;-webkit-text-stroke:0.4px #050505;">GeoReference1</span>
<span class="t " style="left:463.6px;top:850px;font-size:13.2px;line-height:15px;height:15px;color:#fbb85a;will-change:transform;-webkit-text-stroke:0.2px #fbb85a;">1</span>
<span class="t " style="left:265.2px;width:400px;text-align:center;top:880px;font-size:12.5px;line-height:15px;height:15px;color:#050505;will-change:transform;-webkit-text-stroke:0.4px #050505;">Viewer1</span>
<div style="left:699px;top:2px;width:755px;height:30px;background:#242424;"></div>
<div style="left:700px;top:3px;width:28px;height:26px;background:#2a2a2a;"></div>
<div style="left:704px;top:6px;width:10px;height:20px;background:linear-gradient(#b4b4b4 0,#ababab 55%,#8e8e8e 62%,#868686 100%);"></div>
<div style="left:714px;top:6px;width:10px;height:20px;background:linear-gradient(90deg,#5a5a5a,#666);"></div>
<div style="left:728.5px;top:3px;width:129px;height:29px;background:#333;border:1px solid #262626;border-bottom:none;"></div>
<span class="t " style="left:743px;top:9px;font-size:13.75px;line-height:16px;height:16px;color:#cdcdcd;">Properties</span>
<svg style="left:826px;top:9px;" width="16" height="16" viewBox="0 0 16 16"><circle cx="8" cy="8" r="7.5" fill="#363636"/><path d="M4.7 4.7 L11.3 11.3 M11.3 4.7 L4.7 11.3" stroke="#767676" stroke-width="2.2"/></svg>
<div style="left:859px;top:5px;width:200.5px;height:27px;background:#282828;border:1px solid #1e1e1e;border-bottom:none;"></div>
<span class="t " style="left:873px;top:11px;font-size:13.75px;line-height:16px;height:16px;color:#cdcdcd;">Background Renders</span>
<svg style="left:1028px;top:8px;" width="18" height="18" viewBox="0 0 18 18"><circle cx="9" cy="9" r="8.4" fill="#393939"/><path d="M5.6 5.6 L12.4 12.4 M12.4 5.6 L5.6 12.4" stroke="#626262" stroke-width="2.3"/></svg>
<div style="left:1449px;top:74px;width:1px;height:843px;background:#1e1e1e;"></div>
<div style="left:1450px;top:74px;width:4px;height:843px;background:#484848;"></div>
<div style="left:705.5px;top:39.5px;width:27px;height:24px;background:#3a3a3a;border:1px solid #2a2a2a;border-radius:2px;"></div>
<span class="t " style="left:709.8px;top:45px;font-size:13.75px;line-height:16px;height:16px;color:#cdcdcd;">10</span>
<svg style="left:739px;top:43px;" width="19" height="19" viewBox="0 0 19 19"><path d="M9.9 7.4 V5.6 A3.3 3.3 0 0 1 16.5 5.6 V7" fill="none" stroke="#060606" stroke-width="2"/><rect x="0.3" y="6.8" width="13.4" height="11" rx="0.8" fill="#050505"/><rect x="6.3" y="10.8" width="1.3" height="3.2" fill="#353535"/></svg>
<svg style="left:765px;top:46px;" width="15" height="11" viewBox="-0.2 -0.6 15 11"><path d="M0.4 1.6 H7.2 M0.4 5.1 H6 M0.4 8.6 H7.2" stroke="#c4c4c4" stroke-width="2"/><path d="M6.4 0.8 L13.8 9.4 M13.8 0.8 L6.4 9.4" stroke="#dadada" stroke-width="2.3"/></svg>
<svg style="left:791px;top:41px;" width="19" height="22" viewBox="-0.8 0 19 22"><path d="M11.6 1 L16.2 5.4 L6.4 15.6 L1.8 11.2 Z" fill="#cdcdcd"/><path d="M1.8 11.2 L6.4 15.6 L0.8 17 Z" fill="#e6e6e6"/><path d="M10 2.8 L14.6 7.2" stroke="#6e6e6e" stroke-width="1.1"/><path d="M2.6 10.8 L6.6 14.8" stroke="#777" stroke-width="0.8"/><rect x="1" y="19.4" width="12.6" height="1.6" fill="#dedede"/></svg>
<div style="left:812px;top:40px;width:1px;height:21px;background:#444;"></div>
<div style="left:698px;top:2px;width:1px;height:915px;background:#464646;"></div>
<div style="left:705px;top:74px;width:741px;height:438px;background:#323232;"></div>
<div style="left:707px;top:76px;width:737px;height:1px;background:#2a2a2a;"></div>
<div style="left:707px;top:76px;width:1px;height:434px;background:#1e1e1e;"></div>
<div style="left:1443px;top:76px;width:1px;height:434px;background:#1e1e1e;"></div>
<div style="left:707px;top:509px;width:737px;height:1px;background:#1e1e1e;"></div>
<div style="left:705px;top:74px;width:741.4px;height:2px;background:#dcdcdc;"></div>
<div style="left:705px;top:74px;width:1px;height:438px;background:#dcdcdc;"></div>
<div style="left:706px;top:76px;width:1px;height:435px;background:#626262;"></div>
<div style="left:1445px;top:74px;width:1px;height:438px;background:#dcdcdc;"></div>
<div style="left:1444px;top:76px;width:1px;height:435px;background:#505050;"></div>
<div style="left:1446px;top:74px;width:1px;height:438.4px;background:#5a5a5a;"></div>
<div style="left:705px;top:511px;width:741px;height:1px;background:#dcdcdc;"></div>
<div style="left:706px;top:510px;width:739px;height:1px;background:#6c6c6c;"></div>
<div style="left:705px;top:512px;width:742px;height:1px;background:#525252;"></div>
<div style="left:708px;top:77px;width:735px;height:30px;background:linear-gradient(#4c4c4c 0,#424242 12%,#3c3c3c 45%,#303030 100%);"></div>
<div style="left:708px;top:107px;width:735px;height:1.4px;background:#1a1a1a;"></div>
<div style="left:708px;top:108.4px;width:735px;height:4px;background:#363636;"></div>
<div style="left:708px;top:112.4px;width:735px;height:23.6px;background:#303030;"></div>
<div style="left:707.5px;top:112.2px;width:126px;height:25px;background:#333;border:1px solid #242424;border-bottom:none;"></div>
<div style="left:834.2px;top:114.6px;width:64.6px;height:21.4px;background:#282828;border:1px solid #202020;border-bottom:none;"></div>
<div style="left:833.5px;top:135.6px;width:609.5px;height:1px;background:#2a2a2a;"></div>
<span class="t " style="left:722px;top:117px;font-size:13.75px;line-height:16px;height:16px;color:#cdcdcd;">GeoReference</span>
<span class="t " style="left:848.5px;top:119px;font-size:13.75px;line-height:16px;height:16px;color:#cdcdcd;">Node</span>
<div style="left:711.5px;top:137px;width:1px;height:374px;background:#2e2e2e;"></div>
<svg style="left:713px;top:86px;" width="13" height="11" viewBox="-0.5 -0.5 13 11"><polygon points="0.2,0.4 11.8,0.4 6,9.6" fill="#050505"/></svg>
<div style="left:737.7px;top:87.6px;width:30.5px;height:13.7px;background:#05eaf0;border-radius:3px;"></div>
<span class="t " style="left:553px;width:400px;text-align:center;top:89.6px;font-size:8.4px;line-height:10px;height:10px;color:#04191b;font-weight:bold;">BETA</span>
<div style="left:780px;top:79px;width:86px;height:27px;background:linear-gradient(#4b4b4b,#414141);border:1px solid #1f1f1f;border-radius:3px;"></div>
<div style="left:807px;top:80px;width:1px;height:25px;background:#1c1c1c;"></div>
<div style="left:836px;top:80px;width:1px;height:25px;background:#1c1c1c;"></div>
<svg style="left:785px;top:85px;" width="17" height="16" viewBox="-0.7 0 17 16"><circle cx="8" cy="8" r="5.7" fill="#070707"/><circle cx="8" cy="8" r="3.7" fill="#a4a4a4"/><circle cx="8" cy="8" r="1.7" fill="#070707"/></svg>
<svg style="left:812px;top:84px;" width="20" height="18" viewBox="0 0 20 18"><rect x="3" y="6.8" width="15" height="5.4" rx="1.4" fill="#0a0a0a"/><path d="M7.2 3 L9.8 7 M14 3 L11.6 7" stroke="#222" stroke-width="1.2"/><path d="M9.2 12 H11.6 V14 H9.2 Z" fill="#0a0a0a"/></svg>
<svg style="left:844px;top:83px;" width="14" height="20" viewBox="-0.353 -0.635 16.471 21.164"><path d="M4.2 0.8 V5.2 L6 7 H10 L11.8 5.2 V0.8 C14.6 2 15.6 4.6 15 7 C14.4 9 13 10.2 11.2 10.8 V17.8 C11.2 19.4 4.8 19.4 4.8 17.8 V10.8 C3 10.2 1.6 9 1 7 C0.4 4.6 1.4 2 4.2 0.8 Z" fill="#060606"/></svg>
<div style="left:879.5px;top:79.5px;width:324.5px;height:26.5px;background:linear-gradient(#333 0,#3b3b3b 5px);border:1px solid #252525;border-radius:2px;"></div>
<span class="t " style="left:883px;top:86px;font-size:13.75px;line-height:16px;height:16px;color:#cdcdcd;letter-spacing:-0.2px;">GeoReference1</span>
<div style="left:1217px;top:79px;width:143px;height:27px;background:linear-gradient(#4b4b4b,#414141);border:1px solid #1f1f1f;border-radius:3px;"></div>
<div style="left:1244px;top:80px;width:1px;height:25px;background:#1c1c1c;"></div>
<div style="left:1272px;top:80px;width:1px;height:25px;background:#1c1c1c;"></div>
<div style="left:1301px;top:80px;width:1px;height:25px;background:#1c1c1c;"></div>
<div style="left:1330px;top:80px;width:1px;height:25px;background:#1c1c1c;"></div>
<svg style="left:1223px;top:86px;" width="15" height="14" viewBox="-0.5 0 15 14"><rect x="0.6" y="0.6" width="12.8" height="12.8" fill="#dedede" stroke="#080808" stroke-width="1.2"/><path d="M13.2 0.8 L0.8 13.2" stroke="#080808" stroke-width="1.3"/><rect x="0" y="0" width="1.8" height="14" fill="#080808"/></svg>
<svg style="left:1252px;top:86px;" width="14" height="14" viewBox="0 0 14 14"><rect x="0.6" y="0.6" width="12.8" height="12.8" fill="#dedede" stroke="#080808" stroke-width="1.2"/><path d="M13.2 0.8 L0.8 13.2" stroke="#080808" stroke-width="1.3"/><rect x="0" y="0" width="1.8" height="14" fill="#080808"/></svg>
<svg style="left:1279px;top:86px;" width="18" height="14" viewBox="0 0 18 14"><path d="M1 8.6 L6.4 2.2 V5 C11.6 4.2 15.6 6 17.2 10.6 C14.6 8.4 11.4 8 8.6 8.6 L9.4 12.4 H2.2 Z" fill="#0a0a0a"/></svg>
<svg style="left:1308px;top:86px;" width="18" height="14" viewBox="0 0 18 14"><path d="M17 8.6 L11.6 2.2 V5 C6.4 4.2 2.4 6 0.8 10.6 C3.4 8.4 6.6 8 9.4 8.6 L8.6 12.4 H15.8 Z" fill="#3a3a3a"/></svg>
<svg style="left:1337px;top:86px;" width="16" height="15" viewBox="-0.581 0 18.581 17.466"><path d="M11 2.2 H3.6 C2.6 2.2 2 2.8 2 3.8 V9.2 C2 10.2 2.6 10.8 3.6 10.8 H5.4" fill="none" stroke="#080808" stroke-width="2.6"/><path d="M10.6 2.2 H14.2 C15.2 2.2 15.8 2.8 15.8 3.8 V7" fill="none" stroke="#080808" stroke-width="2.6"/><path d="M6.4 8.4 H14 L10.2 13.6 Z" fill="#080808"/><path d="M9.2 13 H11.2 V15.6 H9.2 Z" fill="#080808"/></svg>
<span class="t " style="left:1184.5px;width:400px;text-align:center;top:85px;font-size:16.5px;line-height:19px;height:19px;color:#0a0a0a;font-weight:bold;will-change:transform;">?</span>
<svg style="left:1405px;top:86px;" width="12" height="13" viewBox="-0.342 -0.912 13.684 14.825"><rect x="4.4" y="1" width="7.6" height="6.4" fill="none" stroke="#080808" stroke-width="1.7"/><rect x="1" y="5" width="7.6" height="6.6" fill="#383838" stroke="#080808" stroke-width="1.7"/></svg>
<svg style="left:1427px;top:87px;" width="12" height="11" viewBox="-0.327 -0.692 13.091 12.692"><path d="M1 1 L11 11 M11 1 L1 11" stroke="#080808" stroke-width="2"/></svg>
<span class="t " style="right:627.5px;top:155px;font-size:13.75px;line-height:16px;height:16px;color:#cdcdcd;">Path</span>
<div style="left:834px;top:149.5px;width:597.5px;height:27px;background:linear-gradient(#2f2f2f 0,#393939 3px,#3b3b3b 100%);border:1px solid #2a2a2a;border-top-color:#1c1c1c;border-radius:2px;"></div>
<span class="t " style="left:838px;top:156px;font-size:13.75px;line-height:16px;height:16px;color:#cdcdcd;">{nodename}</span>
<div style="left:834px;top:183px;width:17px;height:17px;background:#2b2b2b;border:1px solid #222;border-radius:1.5px;"></div>
<svg style="left:836px;top:185px;" width="13" height="13" viewBox="-0.6 -0.6 13 13"><path d="M1.8 1.8 L10.2 10.2 M10.2 1.8 L1.8 10.2" stroke="#dadada" stroke-width="3.1"/></svg>
<span class="t " style="left:858px;top:185px;font-size:13.75px;line-height:16px;height:16px;color:#cdcdcd;">Create Missing Parents:</span>
<div style="left:1030px;top:180px;width:78px;height:26px;background:linear-gradient(#4d4d4d,#404040);border:1px solid #1e1e1e;border-radius:3.5px;"></div>
<span class="t " style="left:1036.3px;top:185px;font-size:13.75px;line-height:16px;height:16px;color:#cdcdcd;">Xform</span>
<svg style="left:1089px;top:190px;" width="10" height="6" viewBox="0 0 10 6"><polygon points="0,0 10,0 5,5.6" fill="#a2a2a2"/></svg>
<div style="left:720px;top:218px;width:711.5px;height:1.2px;background:#1d1d1d;"></div>
<div style="left:720px;top:219.2px;width:711.5px;height:1px;background:#3a3a3a;"></div>
<span class="t " style="right:627.5px;top:239px;font-size:13.75px;line-height:16px;height:16px;color:#cdcdcd;">Reference Type</span>
<div style="left:834px;top:233px;width:104.5px;height:26.5px;background:linear-gradient(#4d4d4d,#404040);border:1px solid #1e1e1e;border-radius:3.5px;"></div>
<span class="t " style="left:840.3px;top:239px;font-size:13.75px;line-height:16px;height:16px;color:#cdcdcd;">Reference</span>
<svg style="left:919px;top:243px;" width="11" height="6" viewBox="-0.5 0 11 6"><polygon points="0,0 10,0 5,5.6" fill="#a2a2a2"/></svg>
<span class="t " style="right:627.5px;top:269px;font-size:13.75px;line-height:16px;height:16px;color:#cdcdcd;">Operation</span>
<div style="left:834px;top:263.4px;width:134.5px;height:26.2px;background:linear-gradient(#4d4d4d,#404040);border:1px solid #1e1e1e;border-radius:3.5px;"></div>
<span class="t " style="left:840.3px;top:269px;font-size:13.75px;line-height:16px;height:16px;color:#cdcdcd;">Prepend Back</span>
<svg style="left:949px;top:273px;" width="11" height="7" viewBox="-0.5 -0.4 11 7"><polygon points="0,0 10,0 5,5.6" fill="#a2a2a2"/></svg>
<span class="t " style="right:627.5px;top:299px;font-size:13.75px;line-height:16px;height:16px;color:#cdcdcd;">File Path</span>
<div style="left:834px;top:293px;width:569.5px;height:27px;background:linear-gradient(#2f2f2f 0,#393939 3px,#3b3b3b 100%);border:1px solid #2a2a2a;border-top-color:#1c1c1c;border-radius:2px;"></div>
<span class="t " style="right:627.5px;top:329px;font-size:13.75px;line-height:16px;height:16px;color:#cdcdcd;">Prim Path</span>
<div style="left:834px;top:323px;width:569.5px;height:27px;background:linear-gradient(#2f2f2f 0,#393939 3px,#3b3b3b 100%);border:1px solid #2a2a2a;border-top-color:#1c1c1c;border-radius:2px;"></div>
<span class="t " style="left:838px;top:330px;font-size:13.75px;line-height:16px;height:16px;color:#cdcdcd;letter-spacing:0.325px;">/root/world/geo/asset/Baby_Bot/Baby_Bot_Shape/Arms</span>
<svg style="left:1412px;top:297px;" width="20" height="20" viewBox="0 0 20 20"><path d="M2.4 1.4 H9.6 L11.2 3 H18.4 V17.6 H17 L15.4 4.6 H1 Z" fill="#f2f2f2"/><path d="M1 4.4 H16 L18.2 18.8 H3.4 Z" fill="#020202"/></svg>
<div style="left:1407.6px;top:324px;width:24.4px;height:23.4px;background:#565656;border:1px solid #3c3c3c;border-radius:3.5px;"></div>
<svg style="left:1409px;top:325px;" width="20" height="21" viewBox="0 -0.6 20 21"><path d="M1.4 3.4 H11 M6 9.8 H15 M6 17 H19.6" stroke="#cfcfcf" stroke-width="2.4"/><path d="M4.4 3.4 V17 H6.4 M4.4 9.8 H6.4" fill="none" stroke="#e4e4e4" stroke-width="1.3"/></svg>
<div style="left:834px;top:353.4px;width:99.6px;height:29.2px;background:linear-gradient(#4c4c4c,#3f3f3f);border:1px solid #1e1e1e;border-radius:3.5px;"></div>
<span class="t " style="left:861px;top:360px;font-size:13.75px;line-height:16px;height:16px;color:#cdcdcd;">Reload</span>
<span class="t " style="right:627.5px;top:390px;font-size:13.75px;line-height:16px;height:16px;color:#cdcdcd;">Time Mapping</span>
<div style="left:834px;top:396.8px;width:597.5px;height:1.2px;background:#1d1d1d;"></div>
<div style="left:834px;top:398px;width:597.5px;height:1px;background:#3a3a3a;"></div>
<span class="t " style="right:627.5px;top:418px;font-size:13.75px;line-height:16px;height:16px;color:#cdcdcd;">Offset</span>
<div style="left:834px;top:413px;width:92px;height:24px;background:linear-gradient(#2f2f2f 0,#393939 3px,#3b3b3b 100%);border:1px solid #2a2a2a;border-top-color:#1c1c1c;border-radius:2px;"></div>
<span class="t " style="left:838px;top:419px;font-size:13.75px;line-height:16px;height:16px;color:#cdcdcd;">0</span>
<div style="left:930.1px;top:416px;width:1px;height:6px;background:#1c1c1c;"></div>
<span class="t " style="left:930.7px;top:428px;font-size:9.6px;line-height:11px;height:11px;color:#0c0c0c;-webkit-text-stroke:0.25px #0c0c0c;">0</span>
<div style="left:978.2px;top:416px;width:1px;height:6px;background:#1c1c1c;"></div>
<span class="t " style="left:978.8px;top:428px;font-size:9.6px;line-height:11px;height:11px;color:#0c0c0c;-webkit-text-stroke:0.25px #0c0c0c;">0.1</span>
<div style="left:1028.2px;top:416px;width:1px;height:6px;background:#1c1c1c;"></div>
<span class="t " style="left:1028.8px;top:428px;font-size:9.6px;line-height:11px;height:11px;color:#0c0c0c;-webkit-text-stroke:0.25px #0c0c0c;">0.2</span>
<div style="left:1078.2px;top:416px;width:1px;height:6px;background:#1c1c1c;"></div>
<span class="t " style="left:1078.8px;top:428px;font-size:9.6px;line-height:11px;height:11px;color:#0c0c0c;-webkit-text-stroke:0.25px #0c0c0c;">0.3</span>
<div style="left:1128.2px;top:416px;width:1px;height:6px;background:#1c1c1c;"></div>
<span class="t " style="left:1128.8px;top:428px;font-size:9.6px;line-height:11px;height:11px;color:#0c0c0c;-webkit-text-stroke:0.25px #0c0c0c;">0.4</span>
<div style="left:1178.2px;top:416px;width:1px;height:6px;background:#1c1c1c;"></div>
<span class="t " style="left:1178.8px;top:428px;font-size:9.6px;line-height:11px;height:11px;color:#0c0c0c;-webkit-text-stroke:0.25px #0c0c0c;">0.5</span>
<div style="left:1228.2px;top:416px;width:1px;height:6px;background:#1c1c1c;"></div>
<span class="t " style="left:1228.8px;top:428px;font-size:9.6px;line-height:11px;height:11px;color:#0c0c0c;-webkit-text-stroke:0.25px #0c0c0c;">0.6</span>
<div style="left:1278.2px;top:416px;width:1px;height:6px;background:#1c1c1c;"></div>
<span class="t " style="left:1278.8px;top:428px;font-size:9.6px;line-height:11px;height:11px;color:#0c0c0c;-webkit-text-stroke:0.25px #0c0c0c;">0.7</span>
<div style="left:1328.2px;top:416px;width:1px;height:6px;background:#1c1c1c;"></div>
<span class="t " style="left:1328.8px;top:428px;font-size:9.6px;line-height:11px;height:11px;color:#0c0c0c;-webkit-text-stroke:0.25px #0c0c0c;">0.8</span>
<div style="left:1378.2px;top:416px;width:1px;height:6px;background:#1c1c1c;"></div>
<span class="t " style="left:1378.8px;top:428px;font-size:9.6px;line-height:11px;height:11px;color:#0c0c0c;-webkit-text-stroke:0.25px #0c0c0c;">0.9</span>
<div style="left:1427.5px;top:416px;width:1px;height:6px;background:#1c1c1c;"></div>
<span class="t " style="left:1422.5px;top:428px;font-size:9.6px;line-height:11px;height:11px;color:#0c0c0c;-webkit-text-stroke:0.25px #0c0c0c;">1</span>
<div style="left:930px;top:422px;width:499px;height:2px;background:#050505;"></div>
<div style="left:930px;top:424px;width:499px;height:1px;background:#4a4a4a;"></div>
<div style="left:930px;top:425px;width:499px;height:1px;background:#0a0a0a;"></div>
<div style="left:928.2px;top:416px;width:4.6px;height:12px;background:#9e8833;border:0.6px solid #4a3e14;"></div>
<span class="t " style="right:627.5px;top:445px;font-size:13.75px;line-height:16px;height:16px;color:#cdcdcd;">Scale</span>
<div style="left:834px;top:441px;width:92px;height:23.5px;background:linear-gradient(#2f2f2f 0,#393939 3px,#3b3b3b 100%);border:1px solid #2a2a2a;border-top-color:#1c1c1c;border-radius:2px;"></div>
<span class="t " style="left:838px;top:446px;font-size:13.75px;line-height:16px;height:16px;color:#cdcdcd;">1</span>
<div style="left:930.1px;top:444px;width:1px;height:6px;background:#1c1c1c;"></div>
<span class="t " style="left:930.7px;top:456px;font-size:9.6px;line-height:11px;height:11px;color:#0c0c0c;-webkit-text-stroke:0.25px #0c0c0c;">0</span>
<div style="left:978.2px;top:444px;width:1px;height:6px;background:#1c1c1c;"></div>
<span class="t " style="left:978.8px;top:456px;font-size:9.6px;line-height:11px;height:11px;color:#0c0c0c;-webkit-text-stroke:0.25px #0c0c0c;">0.1</span>
<div style="left:1028.2px;top:444px;width:1px;height:6px;background:#1c1c1c;"></div>
<span class="t " style="left:1028.8px;top:456px;font-size:9.6px;line-height:11px;height:11px;color:#0c0c0c;-webkit-text-stroke:0.25px #0c0c0c;">0.2</span>
<div style="left:1078.2px;top:444px;width:1px;height:6px;background:#1c1c1c;"></div>
<span class="t " style="left:1078.8px;top:456px;font-size:9.6px;line-height:11px;height:11px;color:#0c0c0c;-webkit-text-stroke:0.25px #0c0c0c;">0.3</span>
<div style="left:1128.2px;top:444px;width:1px;height:6px;background:#1c1c1c;"></div>
<span class="t " style="left:1128.8px;top:456px;font-size:9.6px;line-height:11px;height:11px;color:#0c0c0c;-webkit-text-stroke:0.25px #0c0c0c;">0.4</span>
<div style="left:1178.2px;top:444px;width:1px;height:6px;background:#1c1c1c;"></div>
<span class="t " style="left:1178.8px;top:456px;font-size:9.6px;line-height:11px;height:11px;color:#0c0c0c;-webkit-text-stroke:0.25px #0c0c0c;">0.5</span>
<div style="left:1228.2px;top:444px;width:1px;height:6px;background:#1c1c1c;"></div>
<span class="t " style="left:1228.8px;top:456px;font-size:9.6px;line-height:11px;height:11px;color:#0c0c0c;-webkit-text-stroke:0.25px #0c0c0c;">0.6</span>
<div style="left:1278.2px;top:444px;width:1px;height:6px;background:#1c1c1c;"></div>
<span class="t " style="left:1278.8px;top:456px;font-size:9.6px;line-height:11px;height:11px;color:#0c0c0c;-webkit-text-stroke:0.25px #0c0c0c;">0.7</span>
<div style="left:1328.2px;top:444px;width:1px;height:6px;background:#1c1c1c;"></div>
<span class="t " style="left:1328.8px;top:456px;font-size:9.6px;line-height:11px;height:11px;color:#0c0c0c;-webkit-text-stroke:0.25px #0c0c0c;">0.8</span>
<div style="left:1378.2px;top:444px;width:1px;height:6px;background:#1c1c1c;"></div>
<span class="t " style="left:1378.8px;top:456px;font-size:9.6px;line-height:11px;height:11px;color:#0c0c0c;-webkit-text-stroke:0.25px #0c0c0c;">0.9</span>
<div style="left:1427.5px;top:444px;width:1px;height:6px;background:#1c1c1c;"></div>
<span class="t " style="left:1422.5px;top:456px;font-size:9.6px;line-height:11px;height:11px;color:#0c0c0c;-webkit-text-stroke:0.25px #0c0c0c;">1</span>
<div style="left:930px;top:450px;width:499px;height:2px;background:#050505;"></div>
<div style="left:930px;top:452px;width:499px;height:1px;background:#4a4a4a;"></div>
<div style="left:930px;top:453px;width:499px;height:1px;background:#0a0a0a;"></div>
<div style="left:1426.3px;top:444px;width:4.6px;height:12px;background:#9e8833;border:0.6px solid #4a3e14;"></div>
<svg style="left:1432px;top:499px;" width="12" height="12" viewBox="0 0 12 12"><rect x="8.5" y="0.5" width="2" height="2" fill="#8c8c8c"/><rect x="5" y="4.5" width="2" height="2" fill="#8c8c8c"/><rect x="8.5" y="4.5" width="2" height="2" fill="#8c8c8c"/><rect x="1.5" y="8.5" width="2" height="2" fill="#8c8c8c"/><rect x="5" y="8.5" width="2" height="2" fill="#8c8c8c"/><rect x="8.5" y="8.5" width="2" height="2" fill="#8c8c8c"/></svg>
<div style="left:1449.5px;top:75px;width:4.5px;height:12px;background:#505050;"></div>
<svg style="left:1450px;top:545px;" width="4" height="26" viewBox="0 0 4 26"><rect x="1" y="1.0" width="2.4" height="1.6" fill="#2c2c2c"/><rect x="1" y="5.6" width="2.4" height="1.6" fill="#2c2c2c"/><rect x="1" y="10.2" width="2.4" height="1.6" fill="#2c2c2c"/><rect x="1" y="14.8" width="2.4" height="1.6" fill="#2c2c2c"/><rect x="1" y="19.4" width="2.4" height="1.6" fill="#2c2c2c"/></svg>
<svg style="left:0px;top:0px;pointer-events:none;" width="1454" height="917" viewBox="0 0 1454 917"><path fill="#fbb034" d="M666.3 477.7 L820.5 355 L812.3 355.3 Q810.3 353.5 812.3 351.7 L837.3 346.5 L827.6 370.8 Q825.6 372.6 823.8 370.3 L825.6 360.2 L670.7 483.3 Z"/></svg>
</div>
</body></html>
